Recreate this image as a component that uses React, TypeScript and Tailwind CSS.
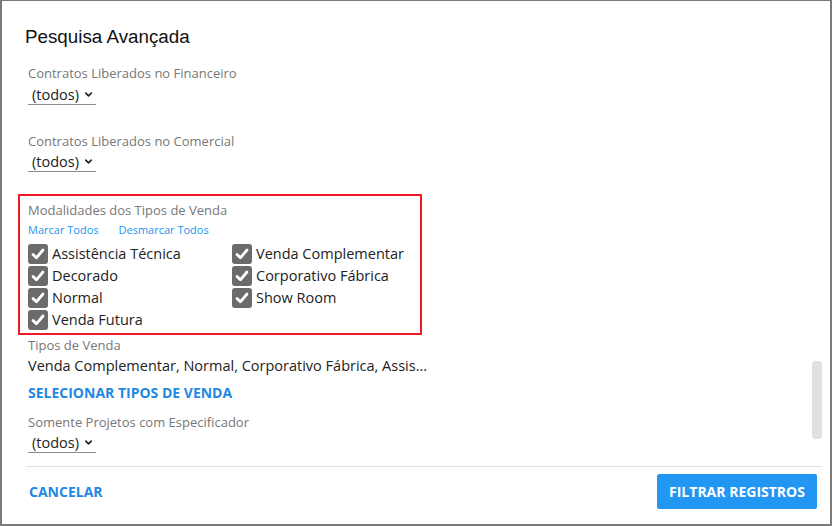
import { ChevronDown } from "lucide-react";

const tipos = [
    ["Assistência Técnica", "Venda Complementar"],
    ["Decorado", "Corporativo Fábrica"],
    ["Normal", "Show Room"],
    ["Venda Futura", null],
];

function Todos() {
    return (
        <div className="ml-[10px] flex h-[20px] w-[68px] items-center border-b border-[#8a8a8a] pl-[4px] text-[14.5px] text-[#222]">
            <span className="leading-[19px]">(todos)</span>
            <ChevronDown size={11} strokeWidth={3.5} className="ml-[4px] text-[#222]" />
        </div>
    );
}

function Check({ label }: { label: string }) {
    return (
        <div className="flex h-[22px] items-center">
            <span className="flex h-[20px] w-[20px] items-center justify-center rounded-[3px] bg-[#6b6b6b]">
                <svg width="16" height="16" viewBox="0 0 16 16">
                    <path d="M3 8.4 L6.4 11.8 L13 4" fill="none" stroke="#fff" strokeWidth="2.8" strokeLinecap="round" strokeLinejoin="round" />
                </svg>
            </span>
            <span className="ml-[4px] text-[14.5px] leading-5 text-[#222]">{label}</span>
        </div>
    );
}

export default function App() {
    return (
        <div
            className="flex h-[526px] w-[832px] flex-col border-t border-r-2 border-b-2 border-l-2 border-[#7a7a7a] bg-white"
            style={{ fontFamily: '"Open Sans", sans-serif' }}
        >
            <div className="h-[55px] pt-[24px] pl-[23px]">
                <h1 className="text-[18.8px] leading-6 text-[#111]" style={{ fontFamily: '"Liberation Sans", Arial, sans-serif' }}>
                    Pesquisa Avançada
                </h1>
            </div>

            <div className="flex h-[410px]">
                <div className="flex-1 pl-[16px]">
                    <p className="mt-[8px] ml-[10px] text-[13px] leading-[18px] text-[#777]">Contratos Liberados no Financeiro</p>
                    <div className="mt-[3px]">
                        <Todos />
                    </div>

                    <p className="mt-[27px] ml-[10px] text-[13px] leading-[18px] text-[#777]">Contratos Liberados no Comercial</p>
                    <div className="mt-[2px]">
                        <Todos />
                    </div>

                    <div className="mt-[22px] w-[404px] border-2 border-[#ed1c24] pt-[5px] pb-[2px] pl-[8px]">
                        <p className="text-[13px] leading-[18px] text-[#777]">Modalidades dos Tipos de Venda</p>
                        <div className="mt-[3px] flex gap-[20px] text-[11px] leading-4 text-[#2196f3]">
                            <span>Marcar Todos</span>
                            <span>Desmarcar Todos</span>
                        </div>
                        <div className="mt-[5px] grid grid-cols-[204px_1fr]">
                            {tipos.map(([a, b]) => (
                                <>
                                    <Check key={a} label={a!} />
                                    {b ? <Check key={b} label={b} /> : <div />}
                                </>
                            ))}
                        </div>
                    </div>

                    <p className="mt-[1px] ml-[10px] text-[13px] leading-[18px] text-[#777]">Tipos de Venda</p>
                    <p className="mt-[2px] ml-[10px] text-[14.5px] leading-5 text-[#222]">
                        Venda Complementar, Normal, Corporativo Fábrica, Assis...
                    </p>
                    <p className="mt-[7px] ml-[10px] text-[14px] leading-5 font-bold text-[#1e88e5]">SELECIONAR TIPOS DE VENDA</p>

                    <p className="mt-[10px] ml-[10px] text-[13px] leading-[18px] text-[#777]">Somente Projetos com Especificador</p>
                    <div className="mt-[2px]">
                        <Todos />
                    </div>
                </div>
                <div className="mr-[8px] w-[10px]">
                    <div className="mt-[305px] h-[78px] rounded-[3px] bg-[#e0e0e0]" />
                </div>
            </div>

            <div className="mr-[8px] ml-[24px] h-px bg-[#e0e0e0]" />

            <div className="flex items-center justify-between pt-[7px] pr-[13px] pl-[27px]">
                <span className="text-[14px] font-bold text-[#1e88e5]">CANCELAR</span>
                <button className="h-[35px] w-[160px] rounded-[2px] bg-[#2196f3] text-[14px] font-bold text-white">
                    FILTRAR REGISTROS
                </button>
            </div>
        </div>
    );
}
